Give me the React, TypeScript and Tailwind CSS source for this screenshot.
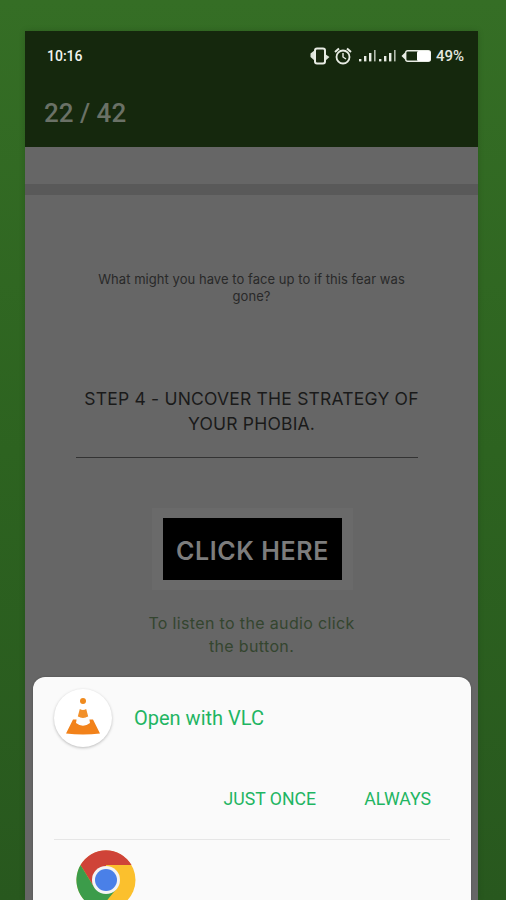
import React from "react";

function Vlc() {
  return (
    <svg width="40" height="40" viewBox="0 0 40 40">
      <circle cx="20" cy="3" r="3" fill="#f08a1d" />
      <path d="M16.8 11 Q20 13 23.2 11 L25.2 18.5 Q20 21.5 14.8 18.5 Z" fill="#f2902a" />
      <path d="M14.8 18.5 Q20 21.5 25.2 18.5 L27 25 Q20 29.5 13 25Z" fill="#fdfdfd" />
      <path d="M10 21.5 L13.6 21.5 L13 25 Q20 30.5 27 25 L26.4 21.5 L30 21.5 L37 35.5 Q20 37.5 3 35.5 Z" fill="#f2821a" />
    </svg>
  );
}

function Chrome() {
  return (
    <svg width="60" height="60" viewBox="0 0 60 60">
      <circle cx="30" cy="30" r="29.5" fill="#fbc02d" />
      <path d="M4.5 15 A29.5 29.5 0 0 1 55.5 15 L30 15 L30 30 L18 37 Z" fill="#cf4338" />
      <path d="M4.5 15 A29.5 29.5 0 0 0 24 58.9 L42 37 L30 30 L18 37 Z" fill="#3c9c4a" />
      <circle cx="30" cy="30" r="14" fill="#f4f4f4" />
      <circle cx="30" cy="30" r="11" fill="#4a80e8" />
    </svg>
  );
}

function StatusIcons() {
  return (
    <div className="flex items-center">
      <svg width="20" height="18" viewBox="0 0 20 18" className="mr-[4px]">
        <path d="M5 3 L0.5 6.5 L0.5 10 L5 14Z M15 7 L19.5 10 L15 14Z" fill="#dfe4da" />
        <rect x="5" y="1.5" width="10" height="15" rx="2" fill="#1a2a10" stroke="#e8ece4" strokeWidth="2" />
      </svg>
      <svg width="18" height="18" viewBox="0 0 18 18" className="mr-[7px]" fill="none" stroke="#e8ece4">
        <circle cx="9" cy="10" r="6.5" strokeWidth="1.8" />
        <path d="M9 6 V10 L12 12" strokeWidth="1.4" />
        <path d="M1 5 L5 1.5 M17 5 L13 1.5" strokeWidth="2" />
      </svg>
      <svg width="38" height="14" viewBox="0 0 38 14" className="mr-[4px]" fill="#e8ece4">
        <rect x="0" y="10" width="2.4" height="2.4" />
        <rect x="5" y="7" width="2.4" height="5.4" />
        <rect x="10" y="4" width="2.4" height="8.4" />
        <rect x="15" y="1" width="1.6" height="11.4" opacity="0.75" />
        <rect x="20" y="10" width="2.4" height="2.4" />
        <rect x="25" y="7" width="2.4" height="5.4" />
        <rect x="30" y="4" width="2.4" height="8.4" />
        <rect x="35" y="1" width="1.6" height="11.4" opacity="0.75" />
      </svg>
      <svg width="30" height="14" viewBox="0 0 30 14" className="mr-[5px]">
        <path d="M4 3.5 L0.5 7 L4 10.5Z" fill="#e8ece4" />
        <rect x="4.7" y="1.7" width="24.6" height="10.6" rx="2" fill="none" stroke="#e8ece4" strokeWidth="1.4" />
        <rect x="16" y="2" width="13.5" height="10" rx="1.5" fill="#ffffff" />
      </svg>
      <span className="pt-[1px] text-[15px] font-medium leading-none text-[#e4e8e0]">49%</span>
    </div>
  );
}

export default function App() {
  return (
    <div
      className="h-[900px] w-[506px] overflow-hidden pl-[25px] pr-[28px] pt-[31px] bg-gradient-to-b from-[#356e25] via-[#2d6320] to-[#28581e]"
      style={{ fontFamily: '"Roboto", "Liberation Sans", sans-serif' }}
    >
      <div className="relative h-[869px] bg-[#666666] shadow-[0_0_6px_rgba(0,0,0,0.15)]">
        <header className="h-[116px] bg-[#15280d] pl-[19px] pr-[14px]">
          <div className="flex h-[48px] items-center justify-between pl-[3px] pt-[1px]">
            <span className="text-[14px] font-medium leading-none text-[#f2f4ef]">10:16</span>
            <StatusIcons />
          </div>
          <div className="pt-[15px] text-[26px] font-medium leading-[38px] text-[#6a7166]">22 / 42</div>
        </header>

        <div className="mt-[37px] h-[11px] bg-[#595959]" />

        <main className="flex flex-col items-center" style={{ fontFamily: '"Inter", "Liberation Sans", sans-serif' }}>
          <p className="mt-[76px] text-center text-[13px] leading-[17px] tracking-[0.05px] text-[#292929]">
            What might you have to face up to if this fear was
            <br />
            gone?
          </p>
          <h2 className="mt-[81px] text-center text-[17.5px] leading-[25px] tracking-[0.2px] text-[#1a1a1a]">
            STEP 4 - UNCOVER THE STRATEGY OF
            <br />
            YOUR PHOBIA.
          </h2>
          <div className="mr-[9px] mt-[21px] h-px w-[342px] bg-[#333333]" />
          <div className="ml-[2px] mt-[50px] bg-[#6a6a6a] px-[11px] py-[10px]">
            <div className="flex h-[62px] w-[179px] items-center justify-center bg-black pt-[5px] text-[25px] font-semibold tracking-[0.6px] text-[#7d7d7d]">
              CLICK HERE
            </div>
          </div>
          <p className="mt-[22px] text-center text-[16px] leading-[23px] tracking-[0.35px] text-[#34452f]">
            To listen to the audio click
            <br />
            the button.
          </p>
        </main>

        <section className="absolute left-[8px] top-[646px] h-[240px] w-[438px] rounded-t-[12px] bg-[#fafafa] px-[21px] pt-[12px] shadow-[0_0_2px_rgba(0,0,0,0.3)]">
          <div className="flex items-center">
            <div className="flex h-[58px] w-[58px] items-center justify-center rounded-full bg-white shadow-[0_1px_3px_rgba(0,0,0,0.25)]">
              <Vlc />
            </div>
            <span className="ml-[22px] text-[20px] leading-none text-[#1fb562]">Open with VLC</span>
          </div>
          <div className="mt-[40px] flex justify-end gap-[48px] pr-[19px] text-[17.7px] leading-[24px] text-[#1fb562]">
            <span>JUST ONCE</span>
            <span>ALWAYS</span>
          </div>
          <div className="mt-[28px] h-px bg-[#e6e6e6]" />
          <div className="pl-[22px] pt-[10px]">
            <Chrome />
          </div>
        </section>
      </div>
    </div>
  );
}
